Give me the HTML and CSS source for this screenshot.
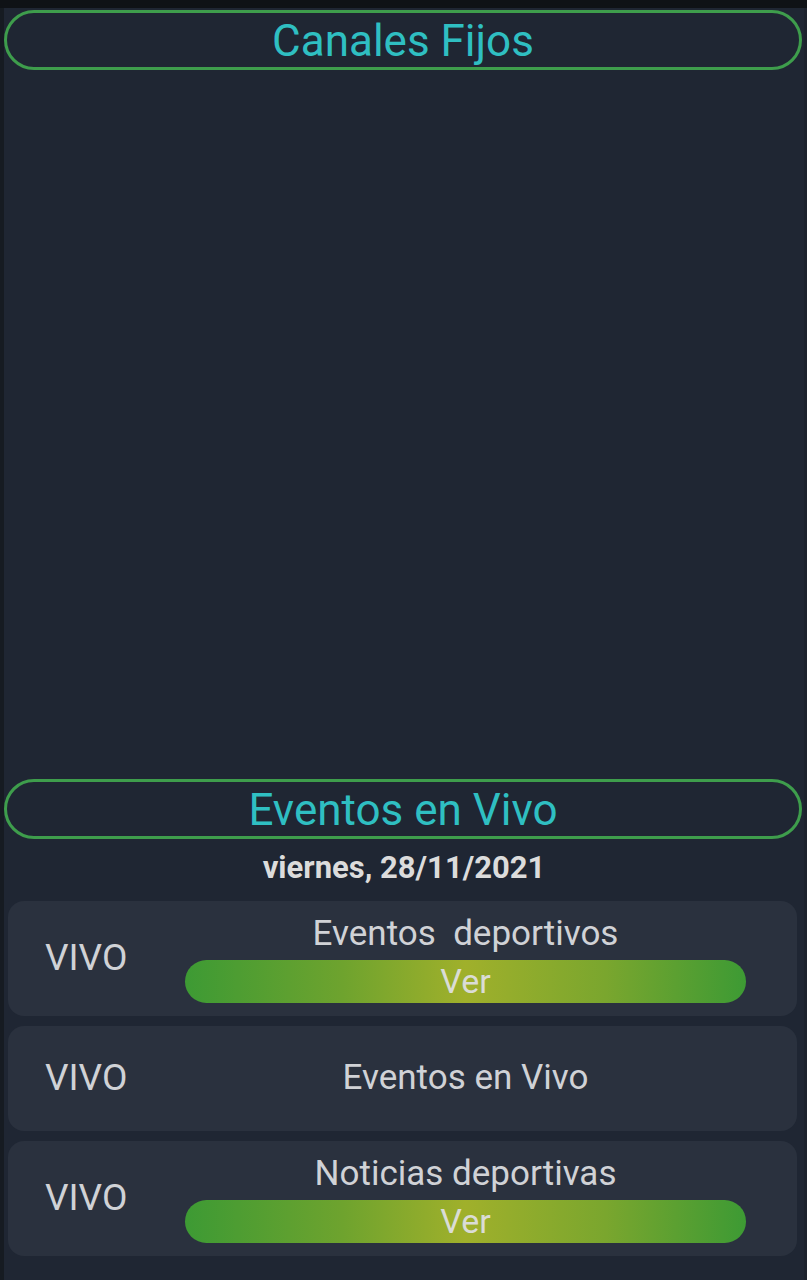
FILE: index.html
```html
<!DOCTYPE html>
<html lang="es">
<head>
<meta charset="utf-8">
<title>Canales</title>
<link rel="stylesheet" href="styles.css">
</head>
<body>
<div class="topbar"></div>
<div class="page">
  <div class="pill"><span class="pill-text">Canales Fijos</span></div>
  <div class="channels"></div>
  <div class="pill"><span class="pill-text">Eventos en Vivo</span></div>
  <div class="date">viernes, 28/11/2021</div>
  <div class="cards">
    <div class="card">
      <div class="tag">VIVO</div>
      <div class="body">
        <div class="title">Eventos&nbsp; deportivos</div>
        <div class="btn">Ver</div>
      </div>
    </div>
    <div class="card card-short">
      <div class="tag">VIVO</div>
      <div class="body">
        <div class="title">Eventos en Vivo</div>
      </div>
    </div>
    <div class="card">
      <div class="tag">VIVO</div>
      <div class="body">
        <div class="title">Noticias deportivas</div>
        <div class="btn">Ver</div>
      </div>
    </div>
  </div>
</div>
</body>
</html>
```

FILE: styles.css
```css
html, body {
  margin: 0;
  padding: 0;
  background: #1f2633;
  font-family: Roboto, "Noto Sans", Arial, sans-serif;
}

body {
  width: 807px;
  min-height: 1280px;
  overflow: hidden;
}

.topbar {
  height: 8px;
  background: #0f1216;
}

.page {
  border-left: 4px solid #161b22;
  border-right: 3px solid #1c222d;
  min-height: 1272px;
  box-sizing: border-box;
  padding-top: 2px;
}

.pill {
  box-sizing: border-box;
  height: 60px;
  margin-right: 2px;
  border: 3px solid #3e9d4c;
  border-radius: 30px;
  display: flex;
  align-items: center;
  justify-content: center;
}

.pill-text {
  color: #2fbfc2;
  font-size: 44px;
  line-height: 1;
  margin-top: 2px;
}

.channels {
  height: 709px;
}

.date {
  margin-top: 11px;
  height: 36px;
  line-height: 36px;
  text-align: center;
  color: #dcdcdc;
  font-weight: 700;
  font-size: 31px;
  margin-bottom: 15px;
}

.cards {
  display: flex;
  flex-direction: column;
  gap: 10px;
  margin-left: 4px;
  margin-right: 7px;
}

.card {
  background: #2a313e;
  border-radius: 16px;
  min-height: 115px;
  box-sizing: border-box;
  padding: 12px 51px 13px 37px;
  display: flex;
  align-items: center;
}

.card-short {
  min-height: 105px;
}

.tag {
  width: 140px;
  flex: none;
  color: #d0d2d6;
  font-size: 37px;
  line-height: 42px;
}

.body {
  flex: 1;
  display: flex;
  flex-direction: column;
  gap: 5px;
  align-items: stretch;
}

.title {
  text-align: center;
  color: #d0d2d6;
  font-size: 35px;
  line-height: 42px;
}

.btn {
  height: 43px;
  border-radius: 22px;
  background: linear-gradient(to right, #3d9a34 0%, #6ea32e 28%, #a0b02b 50%, #7aa62e 75%, #3d9a34 100%);
  color: #dadcd6;
  font-size: 34px;
  line-height: 43px;
  text-align: center;
}
```
